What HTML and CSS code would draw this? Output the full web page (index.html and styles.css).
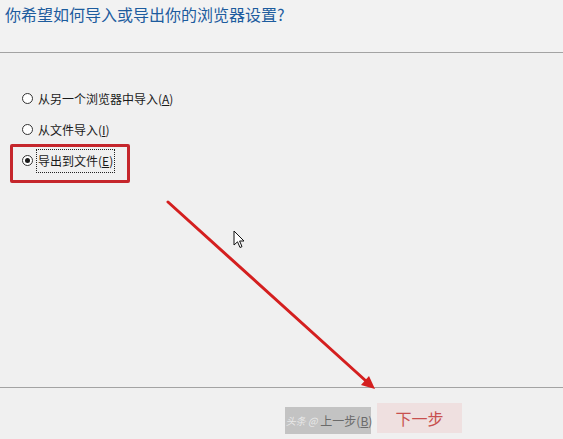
FILE: index.html
```html
<!DOCTYPE html>
<html lang="zh-CN">
<head>
<meta charset="utf-8">
<title>导入和导出设置</title>
<link rel="stylesheet" href="styles.css">
</head>
<body>
<div class="page">
  <header class="header">
    <h1 class="title">你希望如何导入或导出你的浏览器设置?</h1>
  </header>
  <main class="main">
    <div class="options">
      <div class="option">
        <span class="radio"></span>
        <span class="label">从另一个浏览器中导入(<u>A</u>)</span>
      </div>
      <div class="option">
        <span class="radio"></span>
        <span class="label">从文件导入(<u>I</u>)</span>
      </div>
      <div class="option option-marked">
        <span class="radio radio-checked"></span>
        <span class="label label-focus">导出到文件(<u>E</u>)</span>
      </div>
    </div>
  </main>
  <footer class="footer">
    <div class="btn btn-back"><span class="wm">头条 @</span>上一步(<u>B</u>)</div>
    <div class="btn btn-next">下一步</div>
  </footer>

  <svg class="cursor" width="14" height="20" viewBox="0 0 14 20">
    <path d="M1 1 L1 15 L4.5 11.8 L7 17.5 L9 16.6 L6.6 11 L11 11 Z" fill="#ffffff" stroke="#111" stroke-width="1" stroke-linejoin="miter"/>
  </svg>

  <svg class="annot" width="563" height="439" viewBox="0 0 563 439">
    <line x1="168" y1="202" x2="366" y2="381" stroke="#d41f1f" stroke-width="3" stroke-linecap="round"/>
    <polygon points="375,389 361,385 369,376" fill="#d41f1f"/>
  </svg>
</div>
</body>
</html>
```
FILE: styles.css
```css
* { box-sizing: border-box; }
html, body {
  margin: 0;
  padding: 0;
  background: #f0f0f0;
}
body {
  font-family: "Noto Sans CJK SC", "Noto Sans", sans-serif;
  width: 563px;
  height: 439px;
  overflow: hidden;
}
.page {
  position: relative;
  width: 563px;
  height: 439px;
  display: flex;
  flex-direction: column;
}
.header {
  height: 53px;
  border-bottom: 1px solid #a3a3a3;
  padding: 3px 0 0 5px;
  background: #f2f2f2;
}
.title {
  margin: 0;
  font-weight: normal;
  font-size: 16px;
  line-height: 22px;
  color: #1d5c9e;
  letter-spacing: 0;
}
.main {
  height: 335px;
  border-bottom: 1px solid #a3a3a3;
  padding: 30px 0 0 22px;
}
.options {
  display: flex;
  flex-direction: column;
}
.option {
  position: relative;
  height: 31px;
  display: flex;
  align-items: center;
  gap: 3px;
  font-size: 12px;
  color: #1a1a1a;
  white-space: nowrap;
}
.option u { text-decoration: underline; text-underline-offset: 1px; }
.radio {
  width: 11px;
  height: 11px;
  border: 1px solid #333;
  border-radius: 50%;
  background: #fff;
  display: flex;
  align-items: center;
  justify-content: center;
  flex: none;
}
.radio-checked::after {
  content: "";
  width: 5px;
  height: 5px;
  border-radius: 50%;
  background: #1a1a1a;
}
.label {
  line-height: 16px;
  padding: 3px 1px;
  border: 1px solid transparent;
}
.label-focus {
  border: 1px dotted #222;
}
.option-marked::before {
  content: "";
  position: absolute;
  left: -12px;
  top: -1px;
  width: 114px;
  height: 33px;
  border: 3px solid #c5262c;
  border-radius: 2px;
}
.footer {
  flex: 1;
  display: flex;
  justify-content: flex-end;
  align-items: flex-start;
  gap: 6px;
  padding-right: 101px;
}
.btn {
  display: flex;
  align-items: center;
  justify-content: center;
  font-size: 12px;
  white-space: nowrap;
  flex: none;
}
.btn-back {
  margin-top: 19px;
  width: 86px;
  height: 27px;
  background: #c3c3c3;
  color: #6a6a6a;
  padding-left: 2px;
}
.wm {
  color: rgba(255, 255, 255, 0.65);
  font-size: 10px;
  margin-right: 3px;
  font-style: italic;
}
.btn-next {
  margin-top: 15px;
  width: 85px;
  height: 30px;
  background: #efe0e0;
  color: #c8504f;
  font-size: 16px;
}
.cursor {
  position: absolute;
  left: 233px;
  top: 230px;
}
.annot {
  position: absolute;
  left: 0;
  top: 0;
  pointer-events: none;
}
```
